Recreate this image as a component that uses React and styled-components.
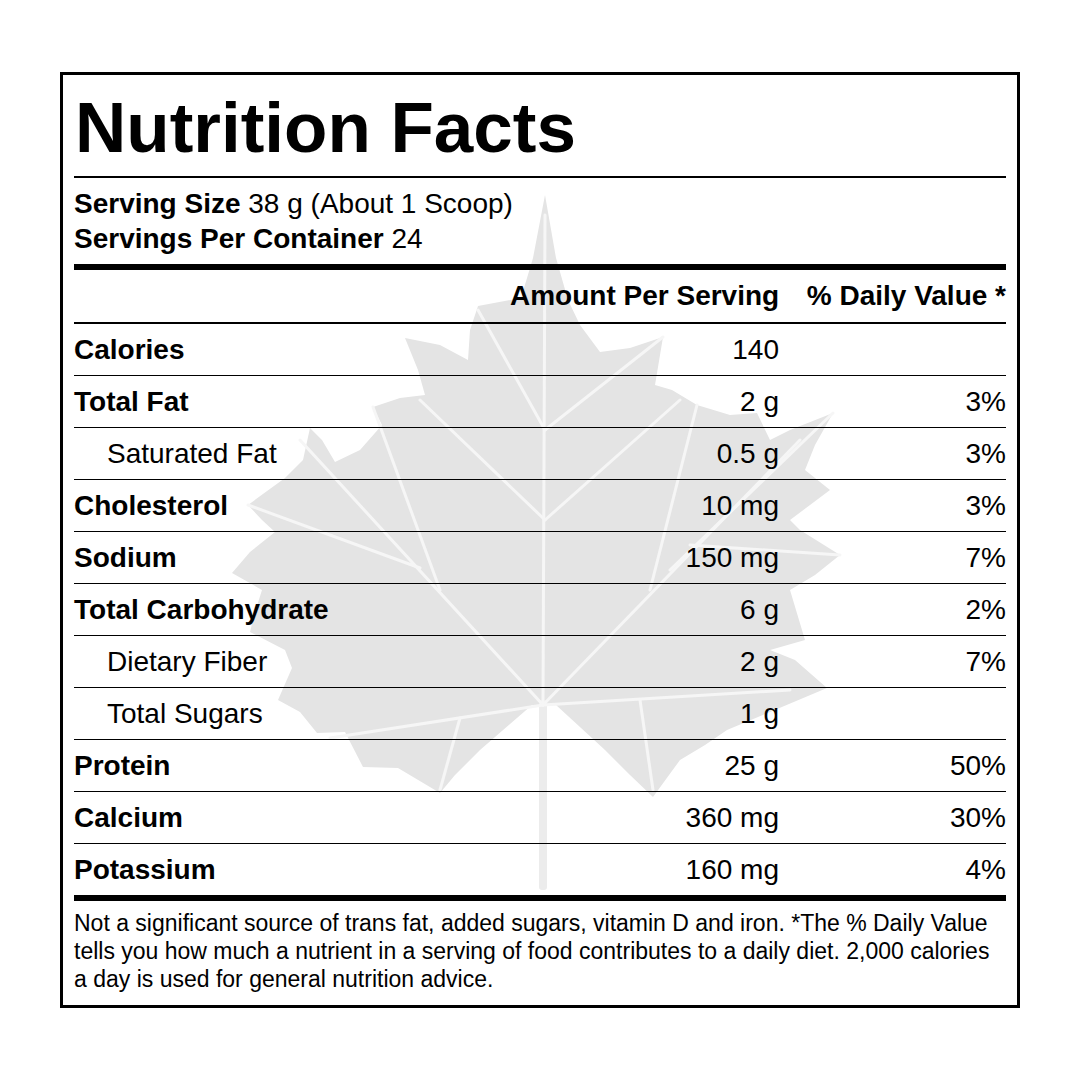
import React from "react";
import styled, { createGlobalStyle } from "styled-components";

// Nutrition label with a faint maple leaf watermark behind the table.

const GlobalStyle = createGlobalStyle`
  html, body {
    margin: 0;
    padding: 0;
    background: #ffffff;
  }
  body {
    font-family: "Liberation Sans", Arial, sans-serif;
    color: #000000;
  }
`;

const rows = [
  { label: "Calories", amount: "140", dv: "", bold: true },
  { label: "Total Fat", amount: "2 g", dv: "3%", bold: true },
  { label: "Saturated Fat", amount: "0.5 g", dv: "3%", indent: true },
  { label: "Cholesterol", amount: "10 mg", dv: "3%", bold: true },
  { label: "Sodium", amount: "150 mg", dv: "7%", bold: true },
  { label: "Total Carbohydrate", amount: "6 g", dv: "2%", bold: true },
  { label: "Dietary Fiber", amount: "2 g", dv: "7%", indent: true },
  { label: "Total Sugars", amount: "1 g", dv: "", indent: true },
  { label: "Protein", amount: "25 g", dv: "50%", bold: true },
  { label: "Calcium", amount: "360 mg", dv: "30%", bold: true },
  { label: "Potassium", amount: "160 mg", dv: "4%", bold: true },
];

const leftEdge =
  "545,195 533,258 521,298 478,306 470,330 468,360 440,345 405,338 418,370 425,395 400,398 373,407 382,425 360,450 335,462 322,440 310,428 303,460 285,478 248,505 262,520 275,532 250,552 232,573 262,590 255,612 250,632 285,650 292,668 278,700 300,712 317,733 345,732 363,767 398,768 440,793 455,775 480,750 532,705";
const rightEdge =
  "556,705 605,750 630,775 653,797 680,760 705,745 727,730 770,712 827,688 795,660 770,650 805,640 790,590 815,575 840,555 800,530 790,520 810,505 830,490 805,470 815,445 833,413 790,430 770,440 757,413 730,415 697,405 672,390 655,385 663,337 630,348 600,352 580,325 568,300 556,258";

const veins = [
  "M543 705 L545 215",
  "M543 705 L300 440",
  "M420 568 L248 505",
  "M440 590 L373 407",
  "M543 705 L800 440",
  "M670 570 L833 413",
  "M690 545 L840 555",
  "M650 590 L697 405",
  "M543 705 L330 738",
  "M460 718 L440 790",
  "M543 705 L790 690",
  "M640 700 L653 790",
  "M545 430 L478 310",
  "M545 430 L663 337",
  "M545 520 L420 400",
  "M545 520 L680 400",
];

const MapleLeaf = () => (
  <Watermark viewBox="60 72 960 936" aria-hidden="true">
    <polygon points={`${leftEdge} ${rightEdge}`} fill="#e4e4e4" />
    <rect x="539" y="700" width="8" height="190" rx="3" fill="#ececec" />
    {veins.map((d) => (
      <path key={d} d={d} stroke="#f6f6f6" strokeWidth="3" fill="none" strokeLinecap="round" />
    ))}
  </Watermark>
);

export default function App() {
  return (
    <Page>
      <GlobalStyle />
      <Label>
        <MapleLeaf />
        <Content>
          <Title>Nutrition Facts</Title>
          <Rule $size={2} />
          <Serving>
            <div>
              <b>Serving Size</b> 38 g (About 1 Scoop)
            </div>
            <div>
              <b>Servings Per Container</b> 24
            </div>
          </Serving>
          <Rule $size={6} />
          <HeaderRow>
            <span />
            <Cell>Amount Per Serving</Cell>
            <Cell>% Daily Value *</Cell>
          </HeaderRow>
          <Rule $size={2} />
          {rows.map((r, i) => (
            <Row key={r.label} $last={i === rows.length - 1}>
              <Name $bold={r.bold} $indent={r.indent}>
                {r.label}
              </Name>
              <Cell>{r.amount}</Cell>
              <Cell>{r.dv}</Cell>
            </Row>
          ))}
          <Rule $size={6} />
          <Footnote>
            Not a significant source of trans fat, added sugars, vitamin D and iron. *The % Daily Value
            tells you how much a nutrient in a serving of food contributes to a daily diet. 2,000 calories
            a day is used for general nutrition advice.
          </Footnote>
        </Content>
      </Label>
    </Page>
  );
}

const Page = styled.div`
  width: 1080px;
  height: 1080px;
  padding: 72px 60px;
  box-sizing: border-box;
`;

const Label = styled.div`
  position: relative;
  width: 960px;
  height: 936px;
  box-sizing: border-box;
  border: 3px solid #000;
  padding: 0 11px;
  overflow: hidden;
`;

const Watermark = styled.svg`
  position: absolute;
  left: -3px;
  top: -3px;
  width: 960px;
  height: 936px;
  z-index: 0;
`;

const Content = styled.div`
  position: relative;
  z-index: 1;
  display: flex;
  flex-direction: column;
`;

const Title = styled.h1`
  margin: 0;
  padding: 17px 0 13px 1px;
  font-size: 71px;
  line-height: 71px;
  font-weight: 700;
  letter-spacing: 0;
`;

const Rule = styled.div`
  height: ${(p) => p.$size}px;
  background: #000;
`;

const Serving = styled.div`
  padding: 8px 0;
  font-size: 28px;
  line-height: 35px;
`;

const HeaderRow = styled.div`
  display: grid;
  grid-template-columns: 1fr 269px 227px;
  height: 52px;
  line-height: 52px;
  font-size: 28px;
  font-weight: 700;
`;

const Row = styled.div`
  display: grid;
  grid-template-columns: 1fr 269px 227px;
  height: 51px;
  line-height: 51px;
  font-size: 28px;
  border-bottom: ${(p) => (p.$last ? "none" : "1px solid #000")};
`;

const Name = styled.span`
  font-weight: ${(p) => (p.$bold ? 700 : 400)};
  padding-left: ${(p) => (p.$indent ? "33px" : "0")};
`;

const Cell = styled.span`
  text-align: right;
  white-space: nowrap;
`;

const Footnote = styled.p`
  margin: 0;
  padding: 8px 0 0;
  font-size: 23px;
  line-height: 28px;
`;
